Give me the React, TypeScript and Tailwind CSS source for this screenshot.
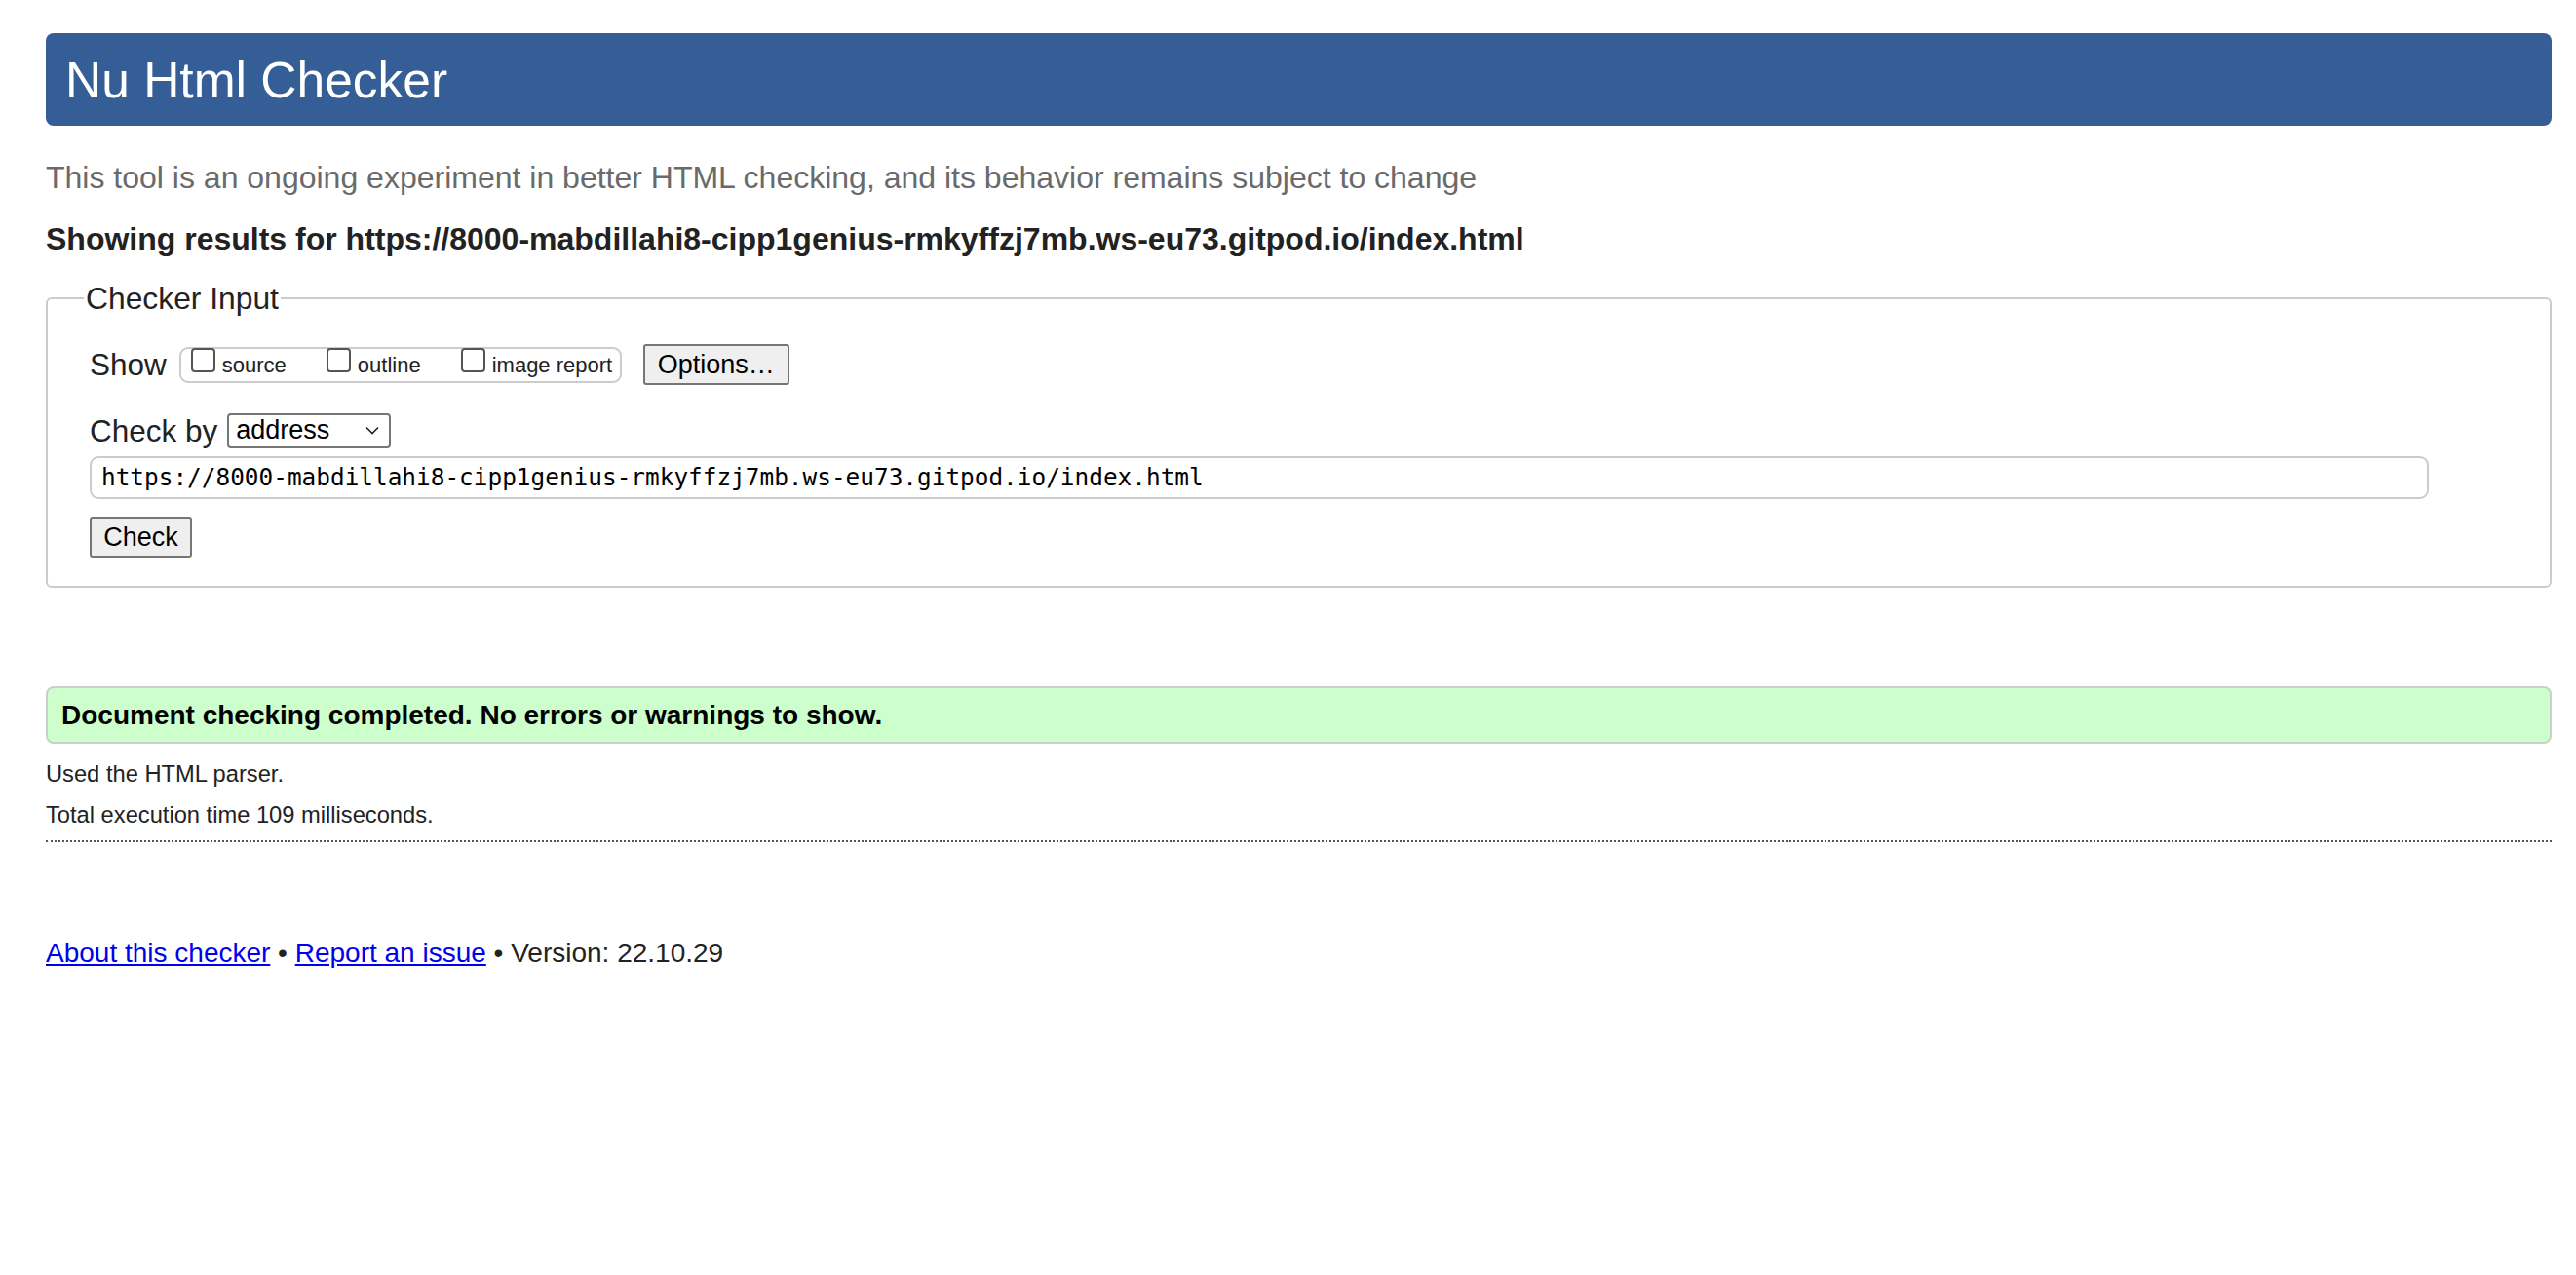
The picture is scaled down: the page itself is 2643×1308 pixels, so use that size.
import React from 'react';

const sans = { fontFamily: '"Liberation Sans", Arial, sans-serif' };

// small fake checkbox, baseline sits on its bottom edge
const Box: React.FC = () => (
  <span className="inline-block w-[25px] h-[25px] border-2 border-[#555] rounded-[4px] bg-white" />
);

const ShowOption: React.FC<{ label: string; className?: string }> = ({ label, className }) => (
  <span className={`inline-flex items-baseline ${className ?? ''}`}>
    <Box />
    <span className="ml-[7px] text-[22px] leading-[26px] text-[#222]">{label}</span>
  </span>
);

const App: React.FC = () => {
  return (
    <div className="min-h-[1308px] bg-white pl-[47px] pr-[25px] pt-[34px] text-[#222]" style={sans}>
      {/* Title bar */}
      <div className="h-[95px] rounded-[8px] bg-[#365e96] flex items-center pl-[20px]">
        <h1 className="mt-[2px] text-white text-[51.5px] leading-none font-normal">Nu Html Checker</h1>
      </div>

      <p className="mt-[35px] text-[32px] leading-[36px] text-[#6a6a6a]">
        This tool is an ongoing experiment in better HTML checking, and its behavior remains subject to change
      </p>

      <p className="mt-[27px] text-[32px] leading-[36px] font-bold text-[#222]">
        Showing results for https://8000-mabdillahi8-cipp1genius-rmkyffzj7mb.ws-eu73.gitpod.io/index.html
      </p>

      {/* Checker input */}
      <fieldset className="mt-[25px] border-2 border-[#ccc] rounded-[6px] pl-[43px] pr-[24px] pt-[29px] pb-[29px]">
        <legend className="-ml-[6px] px-[2px] text-[31.8px] leading-[36px] text-[#222]">Checker Input</legend>

        <div className="flex items-center h-[42px]">
          <span className="text-[31.5px] leading-[36px]">Show</span>
          <div className="ml-[13px] h-[37px] w-[454px] border-2 border-[#ccc] rounded-[9px] flex items-center pl-[10px]">
            <div className="flex items-baseline -mt-[3px]">
              <ShowOption label="source" />
              <ShowOption label="outline" className="ml-[41px]" />
              <ShowOption label="image report" className="ml-[41px]" />
            </div>
          </div>
          <button className="ml-[22px] h-[42px] w-[150px] bg-[#efefef] border-2 border-[#767676] rounded-[3px] text-[27px] leading-none text-black">
            Options…
          </button>
        </div>

        <div className="mt-[28px] flex items-center h-[37px]">
          <span className="text-[31.5px] leading-[36px]">Check by</span>
          <div className="ml-[10px] h-[36px] w-[168px] border-2 border-[#767676] rounded-[4px] bg-white flex items-center pl-[7px] pr-[10px]">
            <span className="text-[27px] leading-none text-black">address</span>
            <svg className="ml-auto" width="14" height="9" viewBox="0 0 14 9" fill="none">
              <path d="M1 1.5 L7 7.5 L13 1.5" stroke="#222" strokeWidth="1.6" />
            </svg>
          </div>
        </div>

        <div className="mt-[8px] h-[44px] w-[2400px] border-2 border-[#ccc] rounded-[9px] flex items-center pl-[10px]">
          <span
            className="text-[24.4px] leading-none text-black"
            style={{ fontFamily: '"DejaVu Sans Mono", "Liberation Mono", monospace' }}
          >
            https://8000-mabdillahi8-cipp1genius-rmkyffzj7mb.ws-eu73.gitpod.io/index.html
          </span>
        </div>

        <button className="mt-[18px] block h-[42px] w-[105px] bg-[#efefef] border-2 border-[#767676] rounded-[3px] text-[27px] leading-none text-black">
          Check
        </button>
      </fieldset>

      {/* Result */}
      <div className="mt-[101px] h-[59px] bg-[#ccffcc] border-2 border-[#c6d2c6] rounded-[8px] flex items-center pl-[14px]">
        <span className="text-[28px] leading-none font-bold text-black">
          Document checking completed. No errors or warnings to show.
        </span>
      </div>

      <p className="mt-[17px] text-[23.7px] leading-[28px]">Used the HTML parser.</p>
      <p className="mt-[14px] text-[23.7px] leading-[28px]">Total execution time 109 milliseconds.</p>
      <div className="mt-[12px] border-b-2 border-dotted border-[#555]" />

      <p className="mt-[97px] text-[28px] leading-[34px] text-[#222]">
        <a className="text-[#0000ee] underline">About this checker</a>
        {' • '}
        <a className="text-[#0000ee] underline">Report an issue</a>
        {' • Version: 22.10.29'}
      </p>
    </div>
  );
};

export default App;
